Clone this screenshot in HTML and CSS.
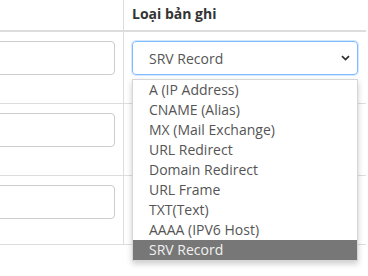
FILE: index.html
```html
<!DOCTYPE html>
<html lang="vi">

<head>
    <meta charset="UTF-8">
    <meta name="viewport" content="width=device-width, initial-scale=1.0">
    <title>Bản ghi DNS</title>
    <link rel="stylesheet" href="styles.css">
</head>

<body>
    <div class="table-wrap">
        <table class="records">
            <thead>
                <tr>
                    <th class="col-value"></th>
                    <th class="col-type">Loại bản ghi</th>
                </tr>
            </thead>
            <tbody>
                <tr>
                    <td class="col-value"><input type="text" class="form-input"></td>
                    <td class="col-type">
                        <div class="type-select">
                            <div class="select-box">
                                <span>SRV Record</span>
                                <svg class="chevron" width="9" height="6" viewBox="0 0 9 6">
                                    <path d="M1 1.2 L4.5 4.6 L8 1.2" fill="none" stroke="#333" stroke-width="1.8"/>
                                </svg>
                            </div>
                            <ul class="select-options">
                                <li>A (IP Address)</li>
                                <li>CNAME (Alias)</li>
                                <li>MX (Mail Exchange)</li>
                                <li>URL Redirect</li>
                                <li>Domain Redirect</li>
                                <li>URL Frame</li>
                                <li>TXT(Text)</li>
                                <li>AAAA (IPV6 Host)</li>
                                <li class="selected">SRV Record</li>
                            </ul>
                        </div>
                    </td>
                </tr>
                <tr>
                    <td class="col-value"><input type="text" class="form-input"></td>
                    <td class="col-type"></td>
                </tr>
                <tr class="last-row">
                    <td class="col-value"><input type="text" class="form-input"></td>
                    <td class="col-type"></td>
                </tr>
            </tbody>
        </table>
    </div>
</body>

</html>
```

FILE: styles.css
```css
body {
    margin: 0;
    font-family: "Open Sans", Arial, sans-serif;
    font-size: 14px;
    color: #333;
    background-color: #fff;
    overflow: hidden;
}

.table-wrap {
    width: 368px;
    height: 276px;
    overflow: hidden;
}

.records {
    border-collapse: collapse;
    margin-left: -200px;
    width: 566px;
}

.records th {
    height: 20px;
    line-height: 20px;
    padding: 4px 8px 6px;
    text-align: left;
    font-weight: bold;
    border-bottom: 2px solid #ddd;
}

.records td {
    padding: 9px 8px 28px;
    vertical-align: top;
    border-bottom: 1px solid #ddd;
}

.records .last-row td {
    padding-bottom: 25px;
}

.col-value {
    width: 307px;
    border-right: 1px solid #ddd;
}

.col-type {
    width: 226px;
}

.form-input {
    display: block;
    box-sizing: border-box;
    width: 100%;
    height: 34px;
    margin: 0;
    border: 1px solid #ccc;
    border-radius: 4px;
    background-color: #fff;
}

.type-select {
    position: relative;
}

.select-box {
    box-sizing: border-box;
    height: 34px;
    display: flex;
    align-items: center;
    justify-content: space-between;
    padding: 0 7px 0 16px;
    border: 1px solid #80bdff;
    border-radius: 4px;
    box-shadow: 0 0 0 1px rgba(128, 189, 255, 0.35);
    color: #555;
    font-size: 14px;
}

.chevron {
    display: block;
}

.select-options {
    position: absolute;
    top: 38px;
    left: 0;
    width: 226px;
    box-sizing: border-box;
    margin: 0;
    padding: 0;
    list-style: none;
    background-color: #fff;
    border: 1px solid #d6d6d6;
    box-shadow: 0 3px 6px rgba(0, 0, 0, 0.2);
}

.select-options li {
    height: 20px;
    line-height: 20px;
    padding-left: 16px;
    color: #555;
    white-space: nowrap;
}

.select-options li.selected {
    background-color: #777;
    color: #f2f2f2;
}
```
